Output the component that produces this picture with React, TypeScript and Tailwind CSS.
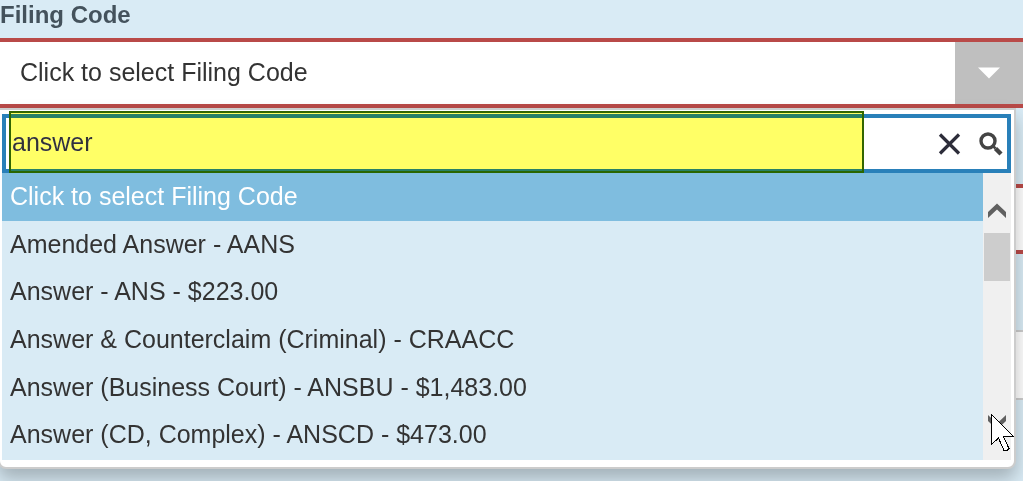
import { useState } from "react";

interface FilingCode {
  value: string;
  label: string;
}

const filingCodes: FilingCode[] = [
  { value: "", label: "Click to select Filing Code" },
  { value: "AANS", label: "Amended Answer - AANS" },
  { value: "ANS", label: "Answer - ANS - $223.00" },
  { value: "CRAACC", label: "Answer & Counterclaim (Criminal) - CRAACC" },
  { value: "ANSBU", label: "Answer (Business Court) - ANSBU - $1,483.00" },
  { value: "ANSCD", label: "Answer (CD, Complex) - ANSCD - $473.00" },
];

const SearchIcon = () => (
  <svg viewBox="0 0 24 24" className="size-6" fill="none" stroke="#444">
    <circle cx="9" cy="9" r="7" strokeWidth="3.4" />
    <path d="M14.500 14.500l2 2" strokeWidth="2.5" />
    <path d="M16.500 16.500l5.500 5.500" strokeWidth="4.400" />
  </svg>
);

const CloseIcon = () => (
  <svg viewBox="0 0 24 24" className="size-6" fill="none" stroke="#2d2d3a">
    <path d="M3 2.500l19 19M22 2.500l-19 19" strokeWidth="3.200" />
  </svg>
);

const ScrollArrow = ({ down = false }: { down?: boolean }) => (
  <svg
    viewBox="0 0 18 16"
    className={down ? "h-4 w-[18px] rotate-180" : "h-4 w-[18px]"}
  >
    <path d="M9 0.500l9 8.500v6l-9-8.500-9 8.500v-6z" fill="#606060" />
  </svg>
);

const Pointer = () => (
  <svg
    viewBox="0 0 23 38"
    className="pointer-events-none absolute right-0 bottom-[15px] h-[38px] w-[23px]"
    shapeRendering="crispEdges"
  >
    <path
      d="M0.500 0.500v30l7-6.500 5.500 12.500h3l2-2-5.500-11.500 10-0.500z"
      fill="#fff"
      stroke="#000"
      strokeWidth="1"
    />
  </svg>
);

const App: React.FC = () => {
  const [search, setSearch] = useState<string>("answer");
  const [selected, setSelected] = useState<FilingCode>(filingCodes[0]);

  return (
    <main className="min-h-screen overflow-hidden bg-[#d9ebf5] font-['Liberation_Sans',Arial,sans-serif] text-[25px] text-[#333]">
      <form className="-ml-0.5">
        <label
          htmlFor="filing-code"
          className="block h-[38px] pl-0.5 text-2xl leading-[30px] font-bold text-[#44525c]"
        >
          Filing Code
        </label>

        <div className="relative">
          <button
            id="filing-code"
            type="button"
            aria-haspopup="listbox"
            aria-expanded="true"
            className="flex h-[70px] w-full items-stretch border-y-4 border-[#b94a48] bg-white text-left"
          >
            <span className="flex-1 self-center pl-[22px]">
              {selected.label}
            </span>
            <span className="flex w-[68px] items-center justify-center bg-[#bfbfbf]">
              <svg viewBox="0 0 22 12" className="h-3 w-[22px]">
                <path d="M0 0.5h22l-11 11z" fill="#fff" />
              </svg>
            </span>
          </button>

          {/* Open menu, lies over the fields below */}
          <div className="absolute top-full right-[7px] left-0 rounded-b-lg border-2 border-[#ccc] bg-white px-[2px] pt-1 pb-[7px] shadow-[0_10px_18px_rgba(0,0,0,0.25)]">
            <div className="relative mr-[1px] flex h-[59px] items-center border-4 border-[#2980b9] bg-white pr-1">
              <input
                type="text"
                aria-label="Search filing codes"
                value={search}
                onChange={(e) => setSearch(e.target.value)}
                className="h-full min-w-0 flex-1 pb-[2px] pl-[6px] outline-none"
              />
              <button
                type="button"
                aria-label="Clear search"
                onClick={() => setSearch("")}
                className="mr-[18px]"
              >
                <CloseIcon />
              </button>
              <button type="button" aria-label="Search">
                <SearchIcon />
              </button>
              <div className="pointer-events-none absolute -top-[7px] right-[143px] -bottom-1 left-[3px] border-2 border-[#336600] bg-[#ffff66] mix-blend-darken" />
            </div>

            <div className="mr-[1px] flex bg-[#d9ebf5]">
              <ul
                role="listbox"
                aria-label="Filing codes"
                className="grid h-[287px] flex-1 grid-rows-6 pb-[1px]"
              >
                {filingCodes.map((code) => (
                  <li
                    key={code.label}
                    role="option"
                    aria-selected={code.value === selected.value}
                    onClick={() => setSelected(code)}
                    className={`flex cursor-pointer items-center pl-2 ${
                      code.value === selected.value
                        ? "bg-[#7fbddf] text-white"
                        : ""
                    }`}
                  >
                    {code.label}
                  </li>
                ))}
              </ul>
              <div className="flex w-7 flex-col items-center bg-[#f0f0f0]">
                <button
                  type="button"
                  aria-label="Scroll up"
                  className="flex h-[60px] items-center pt-4"
                >
                  <ScrollArrow />
                </button>
                <div className="h-12 w-[26px] bg-[#cdcdcd]" />
                <button
                  type="button"
                  aria-label="Scroll down"
                  className="mt-auto flex h-[60px] items-center pb-4"
                >
                  <ScrollArrow down />
                </button>
              </div>
            </div>
            <Pointer />
          </div>
        </div>

        <input
          type="text"
          aria-label="Filing description"
          className="mt-[76px] block h-[70px] w-full border-y-4 border-[#b94a48] bg-white"
        />
        <input
          type="text"
          aria-label="Reference number"
          className="mt-[76px] block h-[70px] w-full border-y-2 border-[#ccc] bg-white"
        />
      </form>
    </main>
  );
};

export default App;
